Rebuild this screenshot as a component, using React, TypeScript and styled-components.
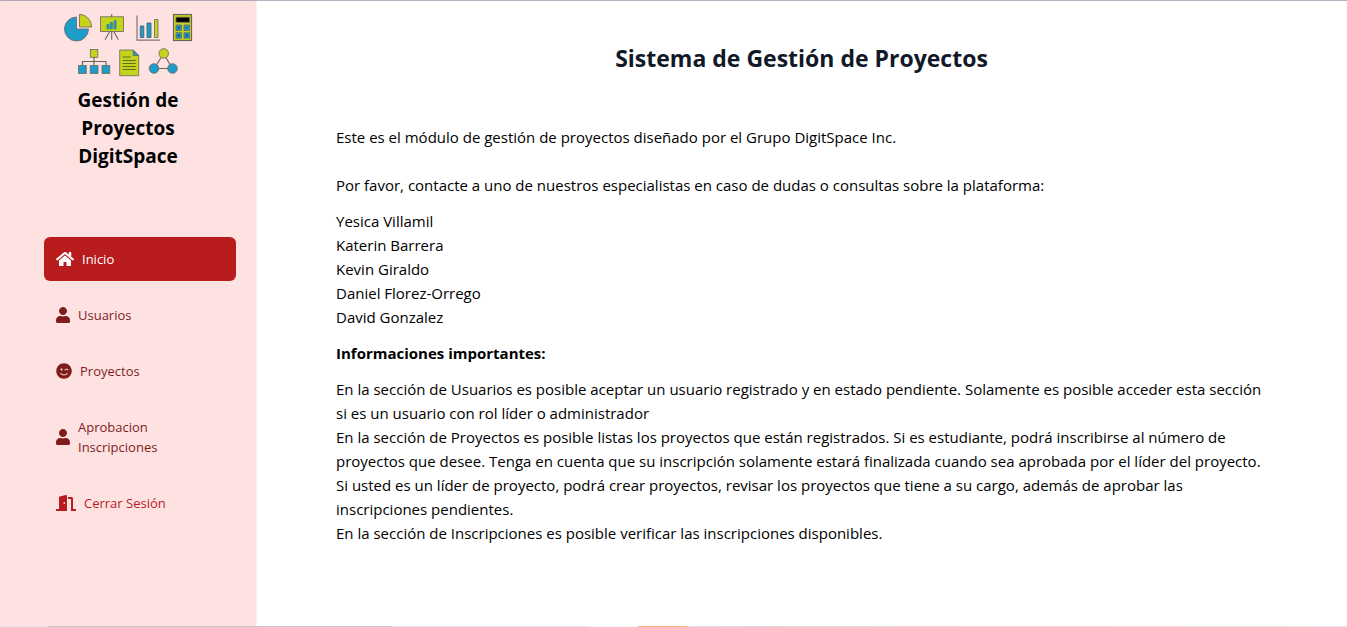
import React from 'react';
import styled, { createGlobalStyle } from 'styled-components';
import { FaDoorOpen, FaHome, FaSmileWink, FaUser } from 'react-icons/fa';

const GlobalStyle = createGlobalStyle`
  *, *::before, *::after { box-sizing: border-box; }
  body {
    margin: 0;
    color: #000;
    background: #fff;
    font-family: 'Segoe UI', 'Open Sans', 'Noto Sans', sans-serif;
    font-size: 15px;
    line-height: 24px;
  }
  h1, h2, p, ul { margin: 0; padding: 0; }
  ul { list-style: none; }
`;

const Page = styled.div`
  display: flex;
  flex-direction: column;
  min-height: 100vh;
  border-top: 1px solid #bcaec2;
`;

const Shell = styled.div`
  display: flex;
  flex: 1;
`;

const Sidebar = styled.aside`
  display: flex;
  flex-direction: column;
  flex: none;
  width: 256px;
  padding: 9px 20px 24px;
  background: #fee2e2;
  box-shadow: 0 0 2px rgba(0, 0, 0, 0.15);
`;

const Brand = styled.div`
  display: flex;
  flex-direction: column;
  align-items: center;
  gap: 6px;
`;

const BrandName = styled.p`
  width: 128px;
  font-size: 19px;
  font-weight: 700;
  line-height: 28px;
  text-align: center;
`;

const Menu = styled.ul`
  display: flex;
  flex-direction: column;
  gap: 12px;
  margin-top: 67px;
  padding-left: 24px;
`;

type Tone = 'active' | 'normal' | 'exit';

const tones: Record<Tone, { color: string; background: string }> = {
  active: { color: '#ffffff', background: '#b91c1c' },
  normal: { color: '#7f1d1d', background: 'transparent' },
  exit: { color: '#b91c1c', background: 'transparent' },
};

const MenuLink = styled.a<{ $tone: Tone; $iconWidth: number }>`
  display: flex;
  align-items: center;
  gap: 8px;
  padding: 12px;
  border-radius: 6px;
  color: ${({ $tone }) => tones[$tone].color};
  background: ${({ $tone }) => tones[$tone].background};
  font-size: 13px;
  line-height: 20px;
  text-decoration: none;

  svg {
    flex: none;
    width: ${({ $iconWidth }) => $iconWidth}px;
    height: 16px;
  }
`;

const MenuLabel = styled.span`
  max-width: 104px;
`;

const Main = styled.main`
  flex: 1;
  min-width: 0;
  padding: 40px 80px;
`;

const Title = styled.h1`
  margin-bottom: 50px;
  color: #111827;
  font-size: 23px;
  font-weight: 700;
  line-height: 34px;
  text-align: center;
`;

const Content = styled.div`
  display: flex;
  flex-direction: column;
  gap: 12px;
`;

const Intro = styled.div`
  display: flex;
  flex-direction: column;
  gap: 24px;
`;

const Subtitle = styled.h2`
  font-size: 15px;
  font-weight: 700;
  line-height: 24px;
`;

const Strip = styled.div`
  height: 1px;
  background: linear-gradient(
    90deg,
    #e4e2f2 0 3.6%,
    #c8c8c8 3.6% 29.1%,
    #e4e2f2 29.1% 43.8%,
    #f6f6f6 43.8% 47.4%,
    #fbb174 47.4% 51%,
    #dcdcec 51%,
    #d8d8d8 56%,
    #f0d8d4 77%,
    #e8e8e8 100%
  );
`;

const Logo = () => (
  <svg width="136" height="70" viewBox="60 10 136 70" role="img" aria-label="DigitSpace" stroke="#6b6560" strokeWidth="0.8">
    <path d="M76.5 29V17a12 12 0 1 0 12 12Z" fill="#1f9dc9" />
    <path d="M79.5 27V14.3A12.5 12.5 0 0 1 91.6 27Z" fill="#c4d31b" />

    <path d="M111.7 14v3M110 31l-5 8.7M111.7 31v8.7M113.4 31l5 8.7" fill="none" strokeWidth="1.1" />
    <rect x="100.5" y="16.8" width="23" height="14.7" fill="#c4d31b" />
    <path d="M107 24.5h2v4.5h-2zM110.3 22.5h2v6.5h-2zM114 20.5h2v8.5h-2z" fill="#1f9dc9" stroke="#367e8c" />

    <path d="M137 15.5v24.7h23" fill="none" stroke="#807376" strokeWidth="1.2" />
    <path d="M140.3 26h3.5v11.5h-3.5zM147 23h4v14.5h-4z" fill="#1f9dc9" stroke="#3c5a68" />
    <path d="M154.5 19.5h3.5v18h-3.5z" fill="#c4d31b" />

    <rect x="173.5" y="14.5" width="18" height="26" fill="#c4d31b" strokeWidth="1.2" />
    <rect x="176" y="17.2" width="13.5" height="5" fill="#000" />
    <path d="M176 25h5.5v5.5h-5.5zM184 25h5.5v5.5h-5.5zM176 32.7h5.5v5.5h-5.5zM184 32.7h5.5v5.5h-5.5z" fill="#1f9dc9" />
    <path d="M177.5 27.7h2.5M178.75 26.5v2.5M185.5 27.7h2.5M177.5 35.5h2.5M178.75 34.2v2.5M185.5 34.8h2.5M185.5 36.3h2.5" stroke="#103c50" />

    <path d="M94 57.5v8M82.5 65.5v-4h23.5v4" fill="none" strokeWidth="1.2" />
    <rect x="90.3" y="49.5" width="7.5" height="7.8" fill="#c4d31b" />
    <path d="M78.5 65.5h7.8v8h-7.8zM90.2 65.5h7.8v8h-7.8zM102 65.5h7.8v8h-7.8z" fill="#1f9dc9" />

    <path d="M119.7 50h13.5l5.5 5.5v20.2h-19z" fill="#c4d31b" />
    <path d="M133.2 50v5.5h5.5z" fill="#1f9dc9" />
    <path d="M122.7 57h8M122.7 60.5h13M122.7 63.5h13M122.7 66.5h13M122.7 69.5h13" stroke="#4d5311" />

    <path d="M163.7 53.5l-9.5 15h18z" fill="none" strokeWidth="1.1" />
    <circle cx="163.7" cy="53.5" r="4.8" fill="#c4d31b" />
    <circle cx="154" cy="68.5" r="4.8" fill="#1f9dc9" />
    <circle cx="172.5" cy="68.5" r="4.8" fill="#1f9dc9" />
  </svg>
);

const menu: { label: string; tone: Tone; Icon: React.ComponentType; iconWidth: number }[] = [
  { label: 'Inicio', tone: 'active', Icon: FaHome, iconWidth: 18 },
  { label: 'Usuarios', tone: 'normal', Icon: FaUser, iconWidth: 14 },
  { label: 'Proyectos', tone: 'normal', Icon: FaSmileWink, iconWidth: 16 },
  { label: 'Aprobacion Inscripciones', tone: 'normal', Icon: FaUser, iconWidth: 14 },
  { label: 'Cerrar Sesión', tone: 'exit', Icon: FaDoorOpen, iconWidth: 20 },
];

const contacts = ['Yesica Villamil', 'Katerin Barrera', 'Kevin Giraldo', 'Daniel Florez-Orrego', 'David Gonzalez'];

const notes = [
  'En la sección de Usuarios es posible aceptar un usuario registrado y en estado pendiente. Solamente es posible acceder esta sección si es un usuario con rol líder o administrador',
  'En la sección de Proyectos es posible listas los proyectos que están registrados. Si es estudiante, podrá inscribirse al número de proyectos que desee. Tenga en cuenta que su inscripción solamente estará finalizada cuando sea aprobada por el líder del proyecto. Si usted es un líder de proyecto, podrá crear proyectos, revisar los proyectos que tiene a su cargo, además de aprobar las inscripciones pendientes.',
  'En la sección de Inscripciones es posible verificar las inscripciones disponibles.',
];

export default function App() {
  return (
    <Page lang="es">
      <GlobalStyle />
      <Shell>
        <Sidebar>
          <Brand>
            <Logo />
            <BrandName>Gestión de Proyectos DigitSpace</BrandName>
          </Brand>
          <nav>
            <Menu>
              {menu.map(({ label, tone, Icon, iconWidth }) => (
                <li key={label}>
                  <MenuLink href="#" $tone={tone} $iconWidth={iconWidth}>
                    <Icon />
                    <MenuLabel>{label}</MenuLabel>
                  </MenuLink>
                </li>
              ))}
            </Menu>
          </nav>
        </Sidebar>
        <Main>
          <Title>Sistema de Gestión de Proyectos</Title>
          <Content>
            <Intro>
              <p>Este es el módulo de gestión de proyectos diseñado por el Grupo DigitSpace Inc.</p>
              <p>Por favor, contacte a uno de nuestros especialistas en caso de dudas o consultas sobre la plataforma:</p>
            </Intro>
            <ul>
              {contacts.map((name) => (
                <li key={name}>{name}</li>
              ))}
            </ul>
            <Subtitle>Informaciones importantes:</Subtitle>
            <div>
              {notes.map((note) => (
                <p key={note}>{note}</p>
              ))}
            </div>
          </Content>
        </Main>
      </Shell>
      <Strip />
    </Page>
  );
}
